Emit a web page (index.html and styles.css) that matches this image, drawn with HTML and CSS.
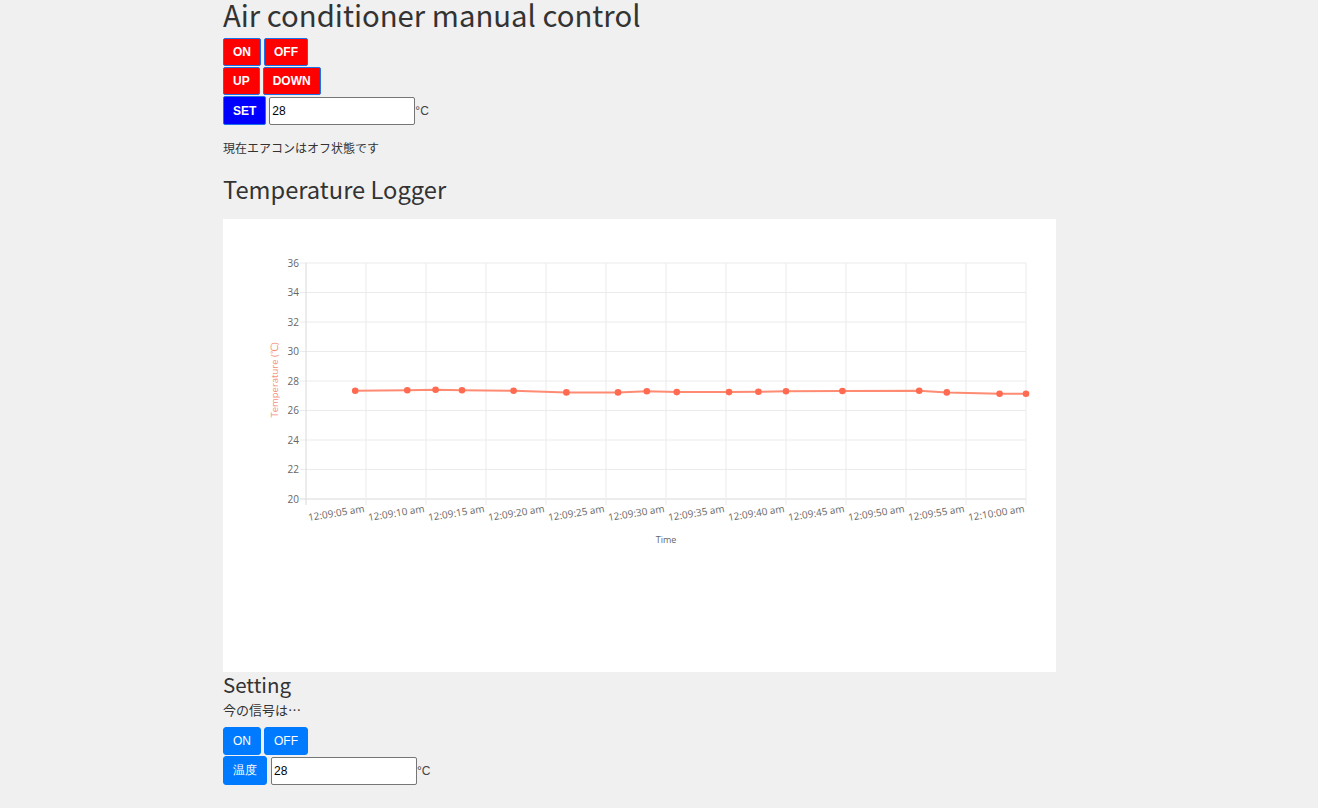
FILE: index.html
```html
<!DOCTYPE html>
<html lang="ja">
<head>
<meta charset="utf-8">
<meta name="viewport" content="width=device-width, initial-scale=1">
<title>Air conditioner</title>
<link rel="stylesheet" href="styles.css">
</head>
<body>
<div class="wrap">

<h1 class="title">Air conditioner manual control</h1>
<div class="btnRow">
  <button class="btn red">ON</button>
  <button class="btn red">OFF</button>
</div>
<div class="btnRow">
  <button class="btn red">UP</button>
  <button class="btn red">DOWN</button>
</div>
<div class="btnRow">
  <button class="btn blue tall">SET</button>
  <input class="temp" type="text" value="28"><span class="unit">°C</span>
</div>
<p class="status">現在エアコンはオフ状態です</p>

<h2 class="sub">Temperature Logger</h2>
<div class="chartBox">
  <svg id="chart" width="833" height="453" viewBox="0 0 833 453"></svg>
</div>

<h3 class="setting">Setting</h3>
<p class="signal">今の信号は…</p>
<div class="btnRow">
  <button class="btn primary">ON</button>
  <button class="btn primary">OFF</button>
</div>
<div class="btnRow">
  <button class="btn primary tall">温度</button>
  <input class="temp wide" type="text" value="28"><span class="unit">°C</span>
</div>

</div>

<script>
// plot area inside the card
var L = 83, R = 803, T = 44, B = 280;
var secs = [4.1, 8.44, 10.8, 13, 17.3, 21.7, 26, 28.4, 30.9, 35.25, 37.7, 40, 44.7, 51.1, 53.4, 57.8, 60];
var temps = [27.34, 27.37, 27.41, 27.37, 27.34, 27.23, 27.23, 27.3, 27.25, 27.25, 27.27, 27.3, 27.32, 27.34, 27.23, 27.14, 27.14];

var svg = document.getElementById("chart");
var out = "";

function yOf(t){ return B - (t - 20) / 16 * (B - T); }
function xOf(s){ return L + s * 12; }

for (var i = 0; i <= 8; i++) {
  var y = B - i * (B - T) / 8;
  out += '<line x1="' + (L - 6) + '" x2="' + R + '" y1="' + y + '" y2="' + y + '" stroke="' + (i == 0 ? "#d9d9d9" : "#ebebeb") + '"/>';
  out += '<text class="tick" x="76" y="' + (y + 3.5) + '" text-anchor="end">' + (20 + i * 2) + '</text>';
}
for (var k = 0; k <= 12; k++) {
  var x = L + k * 60;
  out += '<line x1="' + x + '" x2="' + x + '" y1="' + T + '" y2="' + (B + 6) + '" stroke="' + (k == 0 ? "#d9d9d9" : "#ebebeb") + '"/>';
  if (k > 0) {
    var s = k * 5;
    var label = s == 60 ? "12:10:00 am" : "12:09:" + (s < 10 ? "0" + s : s) + " am";
    out += '<text class="tick" text-anchor="end" transform="translate(' + (x - 1) + ',293) rotate(-9)">' + label + '</text>';
  }
}
var pts = [];
for (var j = 0; j < secs.length; j++) pts.push(xOf(secs[j]) + "," + yOf(temps[j]).toFixed(1));
out += '<polyline points="' + pts.join(" ") + '" fill="none" stroke="#ff8b73" stroke-width="2"/>';
for (var j = 0; j < pts.length; j++) {
  var p = pts[j].split(",");
  out += '<circle cx="' + p[0] + '" cy="' + p[1] + '" r="3.3" fill="#ff6a50"/>';
}
out += '<text class="axisT" x="443" y="324" text-anchor="middle">Time</text>';
out += '<text class="axisY" text-anchor="middle" transform="translate(55,161) rotate(-90)">Temperature (℃)</text>';
svg.innerHTML = out;
</script>
</body>
</html>
```
FILE: styles.css
```css
* {
  box-sizing: border-box;
}

body {
  margin: 0;
  background-color: #f0f0f0;
  color: #333;
  font-family: "Noto Sans CJK JP", "Noto Sans", sans-serif;
}

.wrap {
  margin-left: 223px;
  width: 833px;
}

.title {
  margin: 0;
  font-size: 29.3px;
  font-weight: 400;
  line-height: 28px;
  height: 38px;
}

.btnRow {
  display: flex;
  align-items: center;
  gap: 3px;
  margin-bottom: 1px;
}

.btn {
  height: 28px;
  padding: 0 9px;
  border: 1px solid #1a73e8;
  border-radius: 2px;
  color: #fff;
  font-family: "Liberation Sans", sans-serif;
  font-size: 12px;
  font-weight: 700;
  cursor: pointer;
}

.btn.tall {
  height: 29px;
}

.red {
  background-color: #ff0000;
}

.blue {
  background-color: #0000ff;
}

.primary {
  background-color: #007bff;
  border-color: #007bff;
  border-radius: 3px;
  font-weight: 400;
}

.temp {
  width: 146px;
  height: 28px;
  border: 1px solid #767676;
  border-radius: 2px;
  padding: 0 2px;
  font-family: "Liberation Sans", sans-serif;
  font-size: 12px;
  color: #000;
  background: #fff;
}

.temp.wide {
  margin-left: 1px;
}

.unit {
  margin-left: -3px;
  font-family: "Liberation Sans", sans-serif;
  font-size: 12px;
  color: #444;
}

.status {
  margin: 15px 0 0;
  font-size: 12px;
  line-height: 16px;
}

.sub {
  margin: 17px 0 0;
  font-size: 23.7px;
  font-weight: 400;
  line-height: 32px;
}

.chartBox {
  margin-top: 14px;
  width: 833px;
  height: 453px;
  background-color: #fff;
}

.chartBox svg {
  display: block;
}

.tick {
  font-family: "Open Sans", "Liberation Sans", sans-serif;
  font-size: 10px;
  fill: #666;
}

.axisT {
  font-family: "Open Sans", "Liberation Sans", sans-serif;
  font-size: 9px;
  fill: #666;
}

.axisY {
  font-family: "Open Sans", "Liberation Sans", sans-serif;
  font-size: 9.5px;
  fill: #f6917c;
}

.setting {
  margin: 0;
  font-size: 20.5px;
  font-weight: 400;
  line-height: 24px;
}

.signal {
  margin: 4px 0 7px;
  font-size: 13px;
  line-height: 20px;
}
```
